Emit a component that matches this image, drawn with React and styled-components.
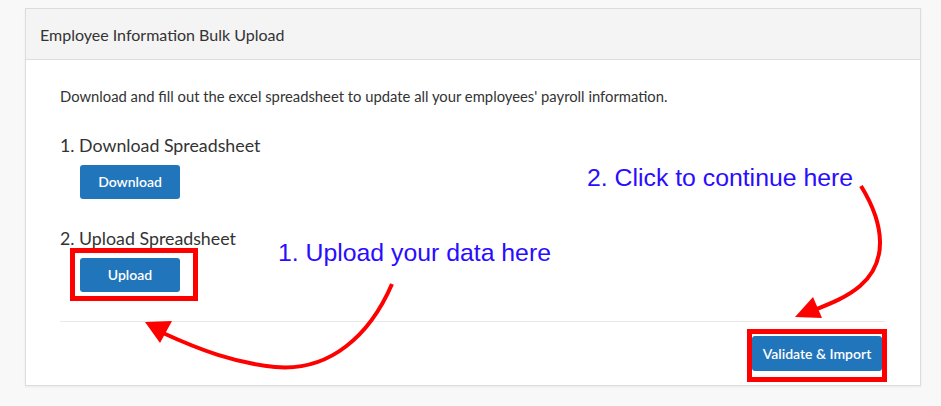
import React from "react";
import styled, { createGlobalStyle } from "styled-components";

const Global = createGlobalStyle`
  html, body { margin: 0; padding: 0; background: #f8f8f8; }
  body { font-family: "Lato", "Open Sans", sans-serif; color: #333; }
`;

const Page = styled.div`
  position: relative;
  width: 941px;
  height: 406px;
  box-sizing: border-box;
  padding: 8px 20px 0 25px;
`;

const Panel = styled.section`
  background: #fff;
  border: 1px solid #dcdcdc;
  box-shadow: 0 1px 2px rgba(0, 0, 0, 0.06);
`;

const PanelHeader = styled.header`
  height: 50px;
  display: flex;
  align-items: center;
  padding: 0 14px;
  background: #f4f4f4;
  border-bottom: 1px solid #dddddd;
  font-size: 16px;
  color: #333;
`;

const PanelBody = styled.div`
  padding: 26px 35px 14px 34px;
  display: flex;
  flex-direction: column;
`;

const Intro = styled.p`
  margin: 0 0 27px;
  font-size: 14.8px;
  line-height: 20px;
`;

const StepTitle = styled.h4`
  margin: 0 0 8px;
  font-size: 17.8px;
  font-weight: 400;
  line-height: 24px;
  color: #333;
`;

const Step = styled.div`
  display: flex;
  flex-direction: column;
  align-items: flex-start;
  margin-bottom: ${(p) => p.$gap || 0}px;
`;

const ButtonWrap = styled.div`
  position: relative;
  margin-left: ${(p) => p.$indent || 0}px;
`;

const Button = styled.button`
  display: flex;
  align-items: center;
  justify-content: center;
  width: ${(p) => p.$w}px;
  height: ${(p) => p.$h || 34}px;
  padding: 0 0 1px;
  border: none;
  border-radius: 3px;
  background: #2175bb;
  color: #fff;
  font-family: "Lato", sans-serif;
  font-size: 14px;
  font-weight: 600;
  cursor: pointer;
`;

const Highlight = styled.span`
  position: absolute;
  box-sizing: border-box;
  border: 5px solid #ff0000;
  pointer-events: none;
  left: ${(p) => p.$l}px;
  top: ${(p) => p.$t}px;
  width: ${(p) => p.$w}px;
  height: ${(p) => p.$h}px;
`;

const Divider = styled.hr`
  margin: 29px 0 14px;
  border: none;
  border-top: 1px solid #e8e8e8;
`;

const Footer = styled.div`
  display: flex;
  justify-content: flex-end;
  padding-right: 3px;
`;

const Overlay = styled.svg`
  position: absolute;
  left: 0;
  top: 0;
  pointer-events: none;
`;

const Note = styled.span`
  position: absolute;
  left: ${(p) => p.$x}px;
  top: ${(p) => p.$y}px;
  font-family: "Liberation Sans", Arial, sans-serif;
  font-size: 24.8px;
  line-height: 24px;
  color: #2a0cff;
  white-space: nowrap;
`;

export default function App() {
  return (
    <>
      <Global />
      <Page>
        <Panel>
          <PanelHeader>Employee Information Bulk Upload</PanelHeader>
          <PanelBody>
            <Intro>
              Download and fill out the excel spreadsheet to update all your employees' payroll information.
            </Intro>
            <Step $gap={27}>
              <StepTitle>1. Download Spreadsheet</StepTitle>
              <ButtonWrap $indent={20}>
                <Button $w={100}>Download</Button>
              </ButtonWrap>
            </Step>
            <Step>
              <StepTitle>2. Upload Spreadsheet</StepTitle>
              <ButtonWrap $indent={20}>
                <Button $w={100}>Upload</Button>
                <Highlight $l={-10} $t={-10} $w={128} $h={53} />
              </ButtonWrap>
            </Step>
            <Divider />
            <Footer>
              <ButtonWrap>
                <Button $w={130} $h={35}>Validate &amp; Import</Button>
                <Highlight $l={-5} $t={-7} $w={140} $h={53} />
              </ButtonWrap>
            </Footer>
          </PanelBody>
        </Panel>

        <Note $x={278} $y={241}>1. Upload your data here</Note>
        <Note $x={587} $y={166}>2. Click to continue here</Note>

        <Overlay width="941" height="406" viewBox="0 0 941 406">
          <path
            d="M392 284 C 370 335 330 372 275 367 C 235 363 200 350 163 333"
            fill="none"
            stroke="#ff0000"
            strokeWidth="4"
          />
          <polygon points="145,322 172,321 160,343" fill="#ff0000" />
          <path
            d="M861 186 C 885 225 888 262 860 286 C 847 297 832 303 812 311"
            fill="none"
            stroke="#ff0000"
            strokeWidth="4"
          />
          <polygon points="795,317 813,297 822,318" fill="#ff0000" />
        </Overlay>
      </Page>
    </>
  );
}
